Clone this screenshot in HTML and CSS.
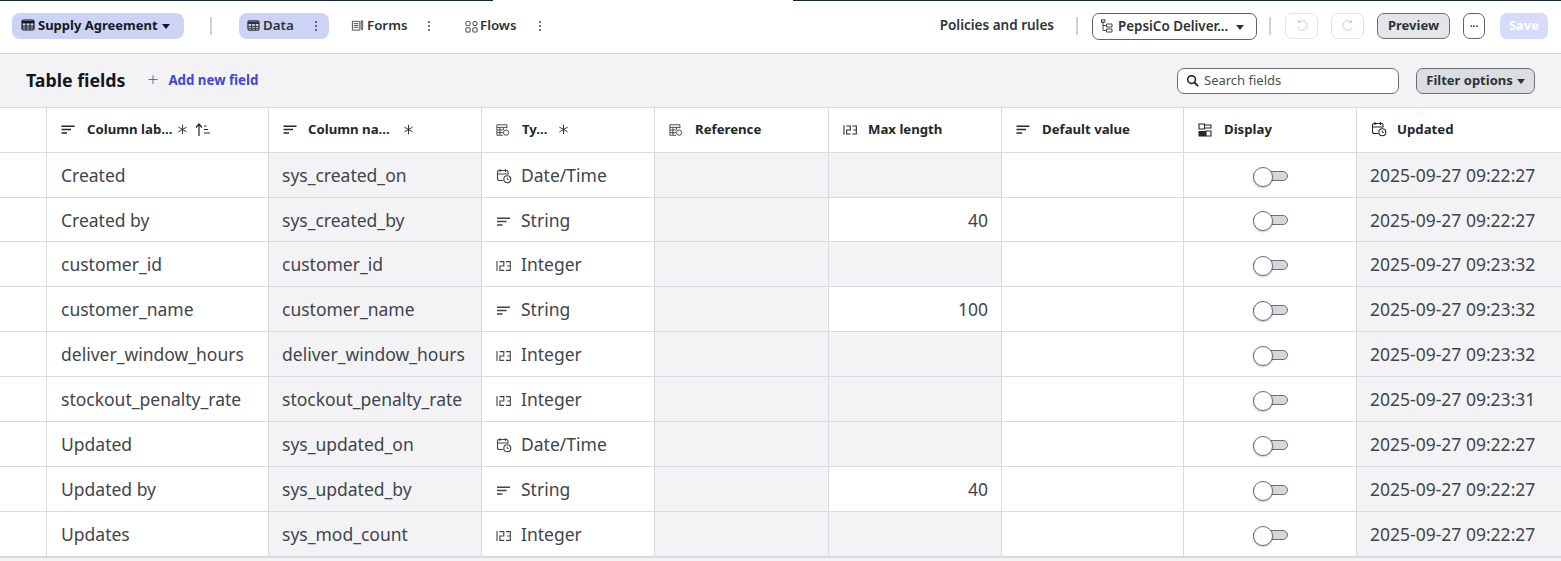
FILE: index.html
```html
<!DOCTYPE html>
<html>
<head>
<title>Table fields</title>
<link rel="stylesheet" href="styles.css">
</head>
<body>
<svg class="defs" width="0" height="0">
  <symbol id="i-table" viewBox="0 0 14 14"><rect x="1" y="2" width="12" height="10" rx="1.5" fill="none" stroke="currentColor" stroke-width="1.2"/><path d="M1 2.8h12v2.6H1z" fill="currentColor"/><path d="M1 8h12M1 10h12M5 5v7M9 5v7" stroke="currentColor" stroke-width="1"/></symbol>
  <symbol id="i-form" viewBox="0 0 14 14"><path d="M1.5 2.5h8v9.5h-8zM3 5h5M3 7h5M3 9h5M11 2h1.600v8.500l-.8 1.500-.8-1.500z" fill="none" stroke="currentColor" stroke-width=".9"/></symbol>
  <symbol id="i-flow" viewBox="0 0 14 14"><g fill="none" stroke="currentColor" stroke-width="1"><rect x="1" y="1.5" width="4.6" height="4.6" rx="1.500"/><rect x="8.4" y="1.5" width="4.6" height="4.6" rx="2.3"/><rect x="1" y="8.4" width="4.6" height="4.6" rx="1"/><rect x="8.4" y="8.4" width="4.6" height="4.6" rx="1"/></g></symbol>
  <symbol id="i-kebab" viewBox="0 0 4 12"><circle cx="2" cy="2" r=".9" fill="currentColor"/><circle cx="2" cy="6" r=".9" fill="currentColor"/><circle cx="2" cy="10" r=".9" fill="currentColor"/></symbol>
  <symbol id="i-tree" viewBox="0 0 12 14"><path d="M2 2.500v9h3M2 6.500h3" fill="none" stroke="currentColor" stroke-width=".9"/><rect x=".5" y=".8" width="3.400" height="2.400" fill="none" stroke="currentColor" stroke-width=".9"/><path d="M5.500 5h5.500v3H5.500zM5.500 10h5.500v3H5.500z" fill="none" stroke="currentColor" stroke-width=".9"/></symbol>
  <symbol id="i-string" viewBox="0 0 14 14"><path d="M.5 3.300h13M.5 6.600h9.500M.5 9.900h5.500" stroke="currentColor" stroke-width="1.500" fill="none"/></symbol>
  <symbol id="i-num" viewBox="0 0 15 10"><path d="M1 0v10M3.500.6h4.300v4.400H3.900v4.400h4.300M10 .6h4.300v8.800H10M11.200 5h3.100" fill="none" stroke="currentColor" stroke-width="1.100"/></symbol>
  <symbol id="i-ref" viewBox="0 0 16 14"><path d="M12.500 5V1H1v12h7M1 4h11.500M1 7h7M1 10h7M4.500 4v9M8.500 4v3" fill="none" stroke="currentColor" stroke-width=".9"/><circle cx="11.500" cy="10" r="3" fill="none" stroke="currentColor" stroke-width=".9"/></symbol>
  <symbol id="i-date" viewBox="0 0 16 16"><path d="M7 12.500H3.500a2 2 0 0 1-2-2V4a1.500 1.500 0 0 1 1.500-1.500h7.500A1.500 1.500 0 0 1 12 4v2.500M1.500 6h10.500M4 1v3M9.500 1v3" fill="none" stroke="currentColor" stroke-width="1.100"/><circle cx="11.300" cy="11.300" r="3.500" fill="none" stroke="currentColor" stroke-width="1.100"/><path d="M11.300 9.500v2h1.500" fill="none" stroke="currentColor" stroke-width=".9"/></symbol>
  <symbol id="i-display" viewBox="0 0 14 14"><path d="M1 1h5.500v5H1zM6.500 2H13v3H6.500zM8 8h5v5H8z" fill="none" stroke="currentColor" stroke-width="1.100"/><rect x=".5" y="8" width="7.500" height="5.500" fill="currentColor"/></symbol>
  <symbol id="i-req" viewBox="0 0 12 12"><path d="M6 .8v10.400M1.500 3.400l9 5.200M10.500 3.400l-9 5.200" stroke="currentColor" stroke-width="1" fill="none"/></symbol>
  <symbol id="i-sort" viewBox="0 0 16 14"><path d="M4 13V1.500M1 4.500l3-3.500 3 3.500" fill="none" stroke="currentColor" stroke-width="1.200"/><path d="M9 3h2.500M9 6.500h4M9 10h6" fill="none" stroke="currentColor" stroke-width="1.100"/></symbol>
  <symbol id="i-search" viewBox="0 0 14 14"><circle cx="6" cy="6" r="4.200" fill="none" stroke="currentColor" stroke-width="1.600"/><path d="M9 9l4 4" stroke="currentColor" stroke-width="1.800"/></symbol>
  <symbol id="i-undo" viewBox="0 0 16 16"><path d="M4.500 3.500a5.500 5.500 0 1 1-1.500 5.500" fill="none" stroke="currentColor" stroke-width="1"/><path d="M4 1v3h3" fill="none" stroke="currentColor" stroke-width="1"/></symbol>
  <symbol id="i-redo" viewBox="0 0 16 16"><path d="M11.500 3.500a5.500 5.500 0 1 0 1.500 5.500" fill="none" stroke="currentColor" stroke-width="1"/><path d="M12 1v3H9" fill="none" stroke="currentColor" stroke-width="1"/></symbol>
</svg>

<div class="topline"></div>
<div class="toolbar">
  <div class="tb-left">
    <button class="pill app"><svg class="ic14"><use href="#i-table"/></svg>Supply Agreement<span class="caret"></span></button>
    <span class="sep sep-a"></span>
    <div class="tab active"><svg class="ic13"><use href="#i-table"/></svg>Data<svg class="kebab"><use href="#i-kebab"/></svg></div>
    <div class="tab forms"><svg class="ic13"><use href="#i-form"/></svg>Forms<svg class="kebab"><use href="#i-kebab"/></svg></div>
    <div class="tab flows"><svg class="ic13"><use href="#i-flow"/></svg>Flows<svg class="kebab"><use href="#i-kebab"/></svg></div>
  </div>
  <div class="tb-right">
    <span class="policies">Policies and rules</span>
    <span class="sep"></span>
    <button class="outline version"><svg class="ic12"><use href="#i-tree"/></svg>PepsiCo Deliver...<span class="caret"></span></button>
    <span class="sep"></span>
    <button class="square"><svg class="ic14"><use href="#i-undo"/></svg></button>
    <button class="square"><svg class="ic14"><use href="#i-redo"/></svg></button>
    <button class="grey preview">Preview</button>
    <button class="outline more">...</button>
    <button class="save">Save</button>
  </div>
</div>

<div class="subbar">
  <h1>Table fields</h1>
  <a class="add"><span class="plus">+</span>Add new field</a>
  <div class="spacer"></div>
  <div class="search"><svg class="ic13"><use href="#i-search"/></svg>Search fields</div>
  <button class="grey filter">Filter options<span class="caret"></span></button>
</div>

<table class="fields">
  <colgroup>
    <col class="c0"><col class="c1"><col class="c2"><col class="c3"><col class="c4"><col class="c5"><col class="c6"><col class="c7"><col class="c8">
  </colgroup>
  <thead>
    <tr>
      <th></th>
      <th><svg class="hic"><use href="#i-string"/></svg>Column lab...<svg class="req"><use href="#i-req"/></svg><svg class="sort"><use href="#i-sort"/></svg></th>
      <th><svg class="hic narrow"><use href="#i-string"/></svg>Column na...<svg class="req far"><use href="#i-req"/></svg></th>
      <th><svg class="hic"><use href="#i-ref"/></svg>Ty...<svg class="req type"><use href="#i-req"/></svg></th>
      <th><svg class="hic"><use href="#i-ref"/></svg>Reference</th>
      <th><svg class="hic narrow"><use href="#i-num"/></svg>Max length</th>
      <th><svg class="hic"><use href="#i-string"/></svg>Default value</th>
      <th><svg class="hic"><use href="#i-display"/></svg>Display</th>
      <th><svg class="hic big"><use href="#i-date"/></svg>Updated</th>
    </tr>
  </thead>
  <tbody>
    <tr><td></td><td>Created</td><td class="ro">sys_created_on</td><td><svg class="tic big"><use href="#i-date"/></svg>Date/Time</td><td class="ro"></td><td class="ro"></td><td></td><td class="tg"><span class="toggle"></span></td><td class="ro">2025-09-27 09:22:27</td></tr>
    <tr class="short"><td></td><td>Created by</td><td class="ro">sys_created_by</td><td><svg class="tic"><use href="#i-string"/></svg>String</td><td class="ro"></td><td class="num">40</td><td></td><td class="tg"><span class="toggle"></span></td><td class="ro">2025-09-27 09:22:27</td></tr>
    <tr><td></td><td>customer_id</td><td class="ro">customer_id</td><td><svg class="tic"><use href="#i-num"/></svg>Integer</td><td class="ro"></td><td class="ro"></td><td></td><td class="tg"><span class="toggle"></span></td><td class="ro">2025-09-27 09:23:32</td></tr>
    <tr><td></td><td>customer_name</td><td class="ro">customer_name</td><td><svg class="tic"><use href="#i-string"/></svg>String</td><td class="ro"></td><td class="num">100</td><td></td><td class="tg"><span class="toggle"></span></td><td class="ro">2025-09-27 09:23:32</td></tr>
    <tr><td></td><td>deliver_window_hours</td><td class="ro">deliver_window_hours</td><td><svg class="tic"><use href="#i-num"/></svg>Integer</td><td class="ro"></td><td class="ro"></td><td></td><td class="tg"><span class="toggle"></span></td><td class="ro">2025-09-27 09:23:32</td></tr>
    <tr><td></td><td>stockout_penalty_rate</td><td class="ro">stockout_penalty_rate</td><td><svg class="tic"><use href="#i-num"/></svg>Integer</td><td class="ro"></td><td class="ro"></td><td></td><td class="tg"><span class="toggle"></span></td><td class="ro">2025-09-27 09:23:31</td></tr>
    <tr><td></td><td>Updated</td><td class="ro">sys_updated_on</td><td><svg class="tic big"><use href="#i-date"/></svg>Date/Time</td><td class="ro"></td><td class="ro"></td><td></td><td class="tg"><span class="toggle"></span></td><td class="ro">2025-09-27 09:22:27</td></tr>
    <tr><td></td><td>Updated by</td><td class="ro">sys_updated_by</td><td><svg class="tic"><use href="#i-string"/></svg>String</td><td class="ro"></td><td class="num">40</td><td></td><td class="tg"><span class="toggle"></span></td><td class="ro">2025-09-27 09:22:27</td></tr>
    <tr><td></td><td>Updates</td><td class="ro">sys_mod_count</td><td><svg class="tic"><use href="#i-num"/></svg>Integer</td><td class="ro"></td><td class="ro"></td><td></td><td class="tg"><span class="toggle"></span></td><td class="ro">2025-09-27 09:22:27</td></tr>
  </tbody>
</table>
<div class="bottom"></div>
</body>
</html>
```

FILE: styles.css
```css
* {
  box-sizing: border-box;
}
html, body {
  margin: 0;
  height: 561px;
  overflow: hidden;
}
body {
  font-family: "Noto Sans", "Open Sans", sans-serif;
  color: #2e3338;
  background: #f3f3f5;
}
button {
  font-family: inherit;
}
.defs {
  position: absolute;
}
svg {
  flex: none;
}
.ic14 { width: 14px; height: 14px; }
.ic13 { width: 13px; height: 13px; }
.ic12 { width: 12px; height: 14px; }

.topline {
  height: 1px;
  background: linear-gradient(to right, #14293a 493px, #fff 493px, #fff 793px, #14293a 793px);
}
.toolbar {
  height: 53px;
  background: #fff;
  border-bottom: 1px solid #d4d6da;
  display: flex;
  align-items: center;
  justify-content: space-between;
  padding: 0 13px 0 12px;
}
.tb-left, .tb-right {
  display: flex;
  align-items: center;
  height: 100%;
  padding-bottom: 2px;
}
.pill {
  border: 0;
  background: #ccd3f6;
  border-radius: 8px;
  height: 26px;
  width: 172px;
  display: flex;
  align-items: center;
  gap: 3px;
  padding: 0 9px 2px;
  font-size: 13px;
  font-weight: 700;
  color: #15191d;
}
.caret {
  display: inline-block;
  width: 0;
  height: 0;
  border-left: 4.5px solid transparent;
  border-right: 4.5px solid transparent;
  border-top: 5px solid currentColor;
  margin-left: 1px;
  margin-top: 3px;
}
.sep {
  width: 2px;
  height: 18px;
  background: #cfd1d5;
}
.sep-a {
  margin: 0 27px 0 26px;
}
.tab {
  display: flex;
  align-items: center;
  height: 26px;
  width: 90px;
  padding: 0 8px 2px;
  gap: 3px;
  font-size: 13.300px;
  font-weight: 600;
  color: #2e3338;
  border-radius: 8px;
  position: relative;
  margin-right: 14px;
}
.tab.active {
  background: #ccd3f6;
  margin-right: 14px;
}
.tab.forms {
  width: 100px;
}
.tab.forms .kebab {
  right: 12px;
}
.tab.flows {
  width: 90px;
  margin-right: 14px;
  gap: 2px;
}
.tab.flows .ic13 {
  margin-top: 3px;
}
.tab.flows .kebab {
  right: 5px;
}
.kebab {
  width: 4px;
  height: 12px;
  position: absolute;
  right: 11px;
  top: 7px;
}
.policies {
  font-size: 13.500px;
  font-weight: 600;
  margin-right: 22px;
  padding-bottom: 2px;
}
.tb-right .sep {
  margin-right: 14px;
}
.outline {
  background: #fff;
  border: 1px solid #5b6268;
  border-radius: 7px;
  color: #2e3338;
}
.version {
  height: 27px;
  width: 165px;
  display: flex;
  align-items: center;
  gap: 5px;
  padding: 0 8px 1px;
  font-size: 13.400px;
  font-weight: 600;
  margin-right: 12px;
}
.version .caret {
  margin-left: 3px;
}
.square {
  width: 33px;
  height: 26px;
  background: #fff;
  border: 1px solid #e2e3e6;
  border-radius: 7px;
  color: #c4c6ca;
  padding: 0;
  margin-right: 13px;
  display: flex;
  align-items: center;
  justify-content: center;
}
.grey {
  background: #e4e5e9;
  border: 1px solid #6b7076;
  border-radius: 7px;
  color: #2e3338;
  font-weight: 700;
  font-size: 13px;
}
.preview {
  height: 26px;
  width: 73px;
  padding: 0 0 3px;
  margin-right: 13px;
}
.more {
  width: 22px;
  height: 26px;
  padding: 0 0 6px;
  font-size: 10px;
  font-weight: 700;
  margin-right: 15px;
}
.save {
  width: 48px;
  height: 26px;
  border: 0;
  border-radius: 7px;
  background: #d6dbf9;
  color: #fff;
  font-size: 13px;
  font-weight: 700;
  padding: 0 0 2px;
}

.subbar {
  height: 53px;
  display: flex;
  align-items: center;
  padding: 0 26px;
}
h1 {
  margin: 0;
  padding-bottom: 2px;
  font-size: 17.800px;
  font-weight: 700;
  color: #15191d;
}
.add {
  display: flex;
  align-items: center;
  margin-left: 22px;
  padding-bottom: 2px;
  font-size: 13.300px;
  font-weight: 700;
  color: #3e45e0;
}
.plus {
  font-size: 19px;
  font-weight: 300;
  margin-right: 10px;
  color: #5a60e0;
  line-height: 1;
}
.spacer {
  flex: 1;
}
.search {
  width: 222px;
  height: 26px;
  background: #fff;
  border: 1px solid #6b7076;
  border-radius: 7px;
  display: flex;
  align-items: center;
  gap: 5px;
  padding: 0 8px 2px;
  font-size: 13px;
  color: #4a5056;
}
.search svg {
  margin-top: 2px;
  color: #15191d;
}
.filter {
  margin-left: 17px;
  height: 26px;
  width: 119px;
  padding: 0 0 2px;
  background: #dcdde1;
  display: flex;
  align-items: center;
  justify-content: center;
}
.filter .caret {
  margin-left: 4px;
}

.fields {
  table-layout: fixed;
  width: 1561px;
  border-collapse: separate;
  border-spacing: 0;
  background: #fff;
  border-top: 1px solid #d9dbde;
}
.c0 { width: 47px; }
.c1 { width: 222px; }
.c2 { width: 213px; }
.c3 { width: 173px; }
.c4 { width: 174px; }
.c5 { width: 173px; }
.c6 { width: 182px; }
.c7 { width: 173px; }
.c8 { width: 204px; }

th, td {
  border-right: 1px solid #d9dbde;
  border-bottom: 1px solid #d9dbde;
  text-align: left;
  white-space: nowrap;
  overflow: hidden;
}
th:last-child, td:last-child {
  border-right: 0;
}
th {
  height: 45px;
  padding: 0 14px 2px;
  font-size: 13.200px;
  font-weight: 700;
  color: #22272c;
}
td {
  height: 45px;
  padding: 0 14px;
  font-size: 17.500px;
  font-weight: 400;
  color: #3f454b;
}
.short td {
  height: 44px;
}
.ro {
  padding-left: 13px;
  background: #f3f3f5;
}
.num {
  padding-right: 13px;
  text-align: right;
}
.hic {
  width: 14px;
  height: 14px;
  margin-right: 12px;
  vertical-align: -3px;
}
.hic.narrow {
  margin-right: 11px;
}
.hic.big, .tic.big {
  width: 16px;
  height: 16px;
}
.hic.big {
  margin-right: 10px;
}
.tic {
  width: 15px;
  height: 14px;
  margin-right: 10px;
  vertical-align: -2px;
}
.tic.big {
  margin-right: 9px;
}
.req {
  width: 11px;
  height: 11px;
  margin-left: 5px;
  vertical-align: -1px;
}
.req.far {
  margin-left: 13px;
}
.req.type {
  margin-left: 11px;
}
.sort {
  width: 16px;
  height: 14px;
  margin-left: 7px;
  vertical-align: -3px;
}
.tg {
  text-align: center;
  padding-bottom: 3px;
}
.toggle {
  display: inline-block;
  position: relative;
  width: 35px;
  height: 10px;
  background: #d4d7db;
  border: 1px solid #6b7076;
  border-radius: 5px;
  vertical-align: middle;
}
.toggle::before {
  content: "";
  position: absolute;
  left: -1px;
  top: -5px;
  width: 18px;
  height: 18px;
  background: #fff;
  border: 1px solid #6b7076;
  border-radius: 50%;
  box-shadow: 0 1px 2px rgba(0, 0, 0, .25);
}
.bottom {
  height: 4px;
  border-top: 1px solid #d9dbde;
}
```
